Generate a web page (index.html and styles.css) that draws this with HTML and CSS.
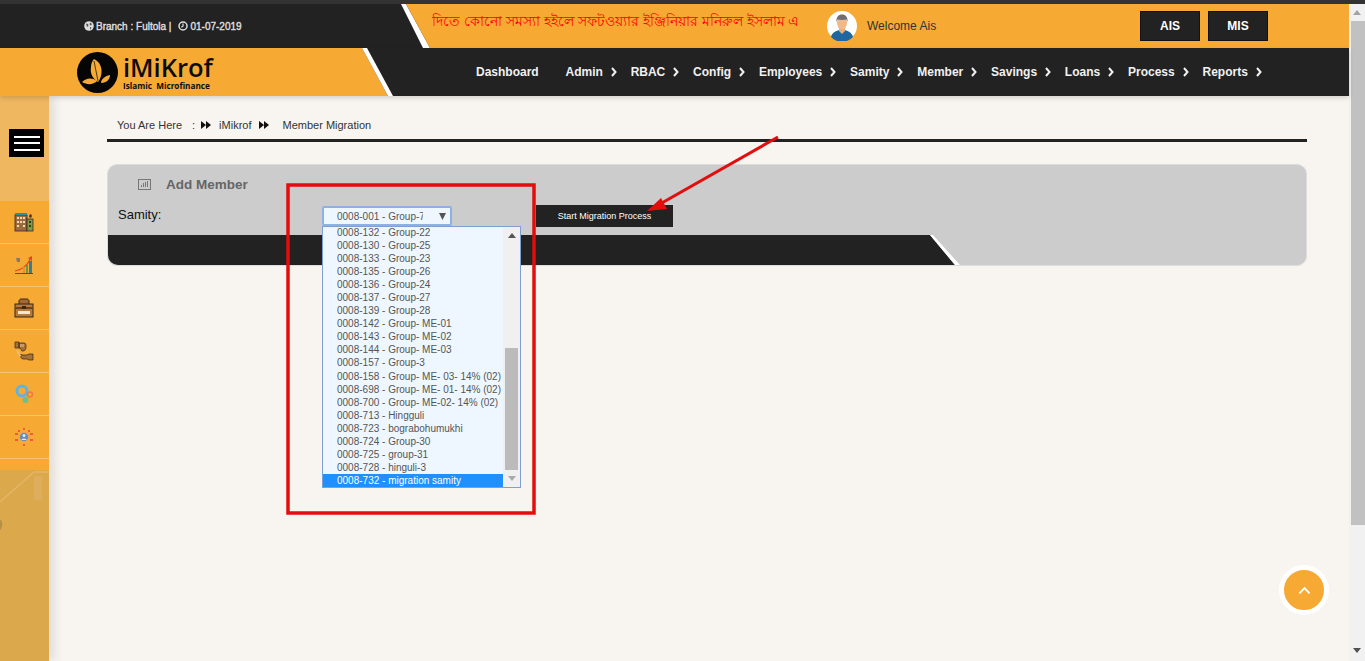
FILE: index.html
```html
<!DOCTYPE html>
<html>
<head>
    <meta charset="UTF-8">
    <title>Member Migration</title>
    <link rel="stylesheet" href="styles.css">
</head>
<body>
<div class="page">
    <div class="top-strip"></div>
    <div class="screen">
        <div class="app">
            <!-- fila superior -->
            <header class="topbar">
                <div class="branch">
                    <svg class="tiny-icon" viewBox="0 0 10 10"><circle cx="5" cy="5" r="4.8" fill="#ddd"/><path d="M2 2.500l2 .5 .5 2-1.500 1zM6 1.500l2 1.500-1 1.500-1.500-1zM6 6l1.500 .5-1.500 2.500z" fill="#555"/></svg>
                    <span>Branch : Fultola |</span>
                    <svg class="tiny-icon clock" viewBox="0 0 10 10"><circle cx="5" cy="5" r="4" fill="none" stroke="#ddd" stroke-width="1.500"/><path d="M5 2.500v2.700l-1.800 1" fill="none" stroke="#ddd" stroke-width="1.200"/></svg>
                    <span>01-07-2019</span>
                </div>
                <svg class="slant" width="30" height="44" viewBox="0 0 30 44"><polygon points="0,0 5,0 29,44 22,44" fill="#fff"/><polygon points="5,0 30,0 30,44 29,44" fill="#f6aa33"/></svg>
                <div class="notice">
                    <div class="notice-text">দিতে কোনো সমস্যা হইলে সফটওয়্যার ইঞ্জিনিয়ার মনিরুল ইসলাম এ</div>
                    <svg class="avatar" viewBox="0 0 30 30">
                        <circle cx="15" cy="15" r="15" fill="#fff"/>
                        <path d="M4 26c1-5 6-6 8-7h6c2 1 7 2 8 7a15 15 0 0 1-22 0z" fill="#20679f"/>
                        <path d="M12 17h6v3l-3 3-3-3z" fill="#e8ae7c"/>
                        <ellipse cx="15" cy="12" rx="5" ry="6.500" fill="#f0b98a"/>
                        <path d="M9.500 11c-.5-5 2-7.500 5.500-7.500s6 2.500 5.500 7.500l-1-2.500c-3 .5-6 .5-9 0z" fill="#6d6f72"/>
                    </svg>
                    <span class="welcome">Welcome Ais</span>
                    <div class="app-btns">
                        <a class="app-btn">AIS</a>
                        <a class="app-btn">MIS</a>
                    </div>
                </div>
            </header>

            <!-- logo y menu -->
            <div class="navbar">
                <div class="brand">
                    <svg class="logo" viewBox="0 0 41 41">
                        <circle cx="20.500" cy="20.500" r="20.500" fill="#050505"/>
                        <path d="M17 7c6 3 9 9 7 17-1 3-2 5-3 6-6-4-8-9-7-15 0-3 1-6 3-8z" fill="#f6aa33"/>
                        <path d="M5 30c4-4 10-5 15-1-4 4-10 4-15 1z" fill="#f6aa33"/>
                        <path d="M24 31c0-4 4-7 9-8 0 4-3 8-9 8z" fill="#f6aa33"/>
                        <path d="M17 9c1 7 3 13 4 20" stroke="#050505" stroke-width=".7" fill="none"/>
                    </svg>
                    <div class="brand-text">
                        <div class="brand-name">iMiKrof</div>
                        <div class="brand-sub">Islamic&nbsp; Microfinance</div>
                    </div>
                </div>
                <svg class="slant" width="31" height="48" viewBox="0 0 31 48"><rect width="31" height="48" fill="#222"/><polygon points="0,0 0,48 26,48" fill="#f6aa33"/><polygon points="0,0 5,0 31,48 26,48" fill="#fff"/></svg>
                <nav class="menu">
                    <a class="menu-item menu-first">Dashboard</a>
                    <a class="menu-item">Admin <svg class="chev" viewBox="0 0 6 10"><path d="M1 1l3.500 4L1 9"/></svg></a>
                    <a class="menu-item">RBAC <svg class="chev" viewBox="0 0 6 10"><path d="M1 1l3.500 4L1 9"/></svg></a>
                    <a class="menu-item">Config <svg class="chev" viewBox="0 0 6 10"><path d="M1 1l3.500 4L1 9"/></svg></a>
                    <a class="menu-item">Employees <svg class="chev" viewBox="0 0 6 10"><path d="M1 1l3.500 4L1 9"/></svg></a>
                    <a class="menu-item">Samity <svg class="chev" viewBox="0 0 6 10"><path d="M1 1l3.500 4L1 9"/></svg></a>
                    <a class="menu-item">Member <svg class="chev" viewBox="0 0 6 10"><path d="M1 1l3.500 4L1 9"/></svg></a>
                    <a class="menu-item">Savings <svg class="chev" viewBox="0 0 6 10"><path d="M1 1l3.500 4L1 9"/></svg></a>
                    <a class="menu-item">Loans <svg class="chev" viewBox="0 0 6 10"><path d="M1 1l3.500 4L1 9"/></svg></a>
                    <a class="menu-item">Process <svg class="chev" viewBox="0 0 6 10"><path d="M1 1l3.500 4L1 9"/></svg></a>
                    <a class="menu-item">Reports <svg class="chev" viewBox="0 0 6 10"><path d="M1 1l3.500 4L1 9"/></svg></a>
                </nav>
            </div>

            <div class="body-row">
                <aside class="sidebar">
                    <div class="side-top">
                        <div class="burger"><i></i><i></i><i></i></div>
                    </div>
                    <div class="side-item">
                        <svg class="side-icon" viewBox="0 0 20 20">
                            <rect x="1" y="3" width="12" height="16" fill="#9a6a43" stroke="#3a2a1c" stroke-width=".8"/>
                            <rect x="1" y="1" width="12" height="2" fill="#2f8f98"/>
                            <rect x="13" y="7" width="6" height="12" fill="#7d9a4a" stroke="#3a2a1c" stroke-width=".8"/>
                            <path d="M3 5h2v2H3zM6 5h2v2H6zM9 5h2v2H9zM3 9h2v2H3zM6 9h2v2H6zM9 9h2v2H9zM3 13h2v2H3zM9 13h2v2H9z" fill="#f3d9a8"/>
                            <path d="M15 9h2v2h-2zM15 13h2v2h-2z" fill="#2c3a18"/>
                            <path d="M15 5c0-2 1-3 2-3l1 2-1 2z" fill="#4a3a22"/>
                        </svg>
                    </div>
                    <div class="side-item">
                        <svg class="side-icon" viewBox="0 0 20 20">
                            <path d="M2 3h4v4H3z" fill="#8b7a55"/>
                            <path d="M1 16C8 15 13 11 17 3" fill="none" stroke="#e8402a" stroke-width="1.200"/>
                            <path d="M14 3l4-2 0 5z" fill="#e8402a"/>
                            <rect x="9" y="12" width="2" height="6" fill="#e8902a"/>
                            <rect x="12" y="10" width="2" height="8" fill="#6c9a3a"/>
                            <rect x="15" y="6" width="3" height="12" fill="#2d7fa8"/>
                            <rect x="1" y="18" width="18" height="1" fill="#6b4a22"/>
                        </svg>
                    </div>
                    <div class="side-item">
                        <svg class="side-icon" viewBox="0 0 20 20">
                            <path d="M5 6V3c0-1 1-2 2-2h6c1 0 2 1 2 2v3" fill="#a5682f" stroke="#35261a"/>
                            <rect x="1" y="6" width="18" height="13" fill="#b87a3a" stroke="#35261a"/>
                            <rect x="1" y="9" width="18" height="2" fill="#6a431f"/>
                            <rect x="4" y="13" width="12" height="3" fill="#f2e6cf"/>
                            <rect x="8" y="8" width="4" height="3" fill="#35261a"/>
                        </svg>
                    </div>
                    <div class="side-item">
                        <svg class="side-icon" viewBox="0 0 20 20">
                            <path d="M1 1h4v6H1zM5 2h5c2 0 2 2 2 4s-1 4-3 4H8L6 7H5z" fill="#a5713a" stroke="#35261a" stroke-width=".7"/>
                            <path d="M7 14h6l2-1h4v6h-4l-2-1H9c-2 0-3-3-2-5z" fill="#a5713a" stroke="#35261a" stroke-width=".7"/>
                            <path d="M7 3v3M9 3v3" stroke="#e9c48f"/>
                            <path d="M3 9c1 3 2 5 4 6" stroke="#e9c48f" stroke-width="1.300" fill="none"/>
                        </svg>
                    </div>
                    <div class="side-item">
                        <svg class="side-icon" viewBox="0 0 20 20">
                            <circle cx="8" cy="7" r="5" fill="none" stroke="#5cb4e0" stroke-width="3"/>
                            <circle cx="16" cy="10.500" r="2.500" fill="none" stroke="#ee7b45" stroke-width="1.500"/>
                            <circle cx="11.500" cy="16" r="3" fill="#6fbf8a"/>
                        </svg>
                    </div>
                    <div class="side-item">
                        <svg class="side-icon" viewBox="0 0 20 20">
                            <circle cx="10" cy="10" r="4.500" fill="#5b8ec4" stroke="#e9a06e"/>
                            <circle cx="10" cy="8.500" r="1.500" fill="#f3e2cc"/>
                            <path d="M7.500 13c0-2 5-2 5 0z" fill="#f3e2cc"/>
                            <path d="M9 1h2v2H9zM9 17h2v2H9zM1 6h3v2H1zM16 6h3v2h-3zM1 12h3v2H1zM16 12h3v2h-3zM4 3h2v2H4zM14 3h2v2h-2z" fill="#ee5c3d"/>
                        </svg>
                    </div>
                    <div class="side-photo">
                        <svg class="road" viewBox="0 0 49 60" preserveAspectRatio="none">
                            <path d="M0 32L34 2h15" fill="none" stroke="#e3b566" stroke-width="1.500"/>
                            <path d="M34 6h8v24h-8z" fill="#dfae5c"/>
                            <path d="M0 50c3 0 3 8 0 10z" fill="#b48f4a"/>
                        </svg>
                    </div>
                </aside>

                <main class="main">
                    <div class="crumbs">
                        <span>You Are Here</span>
                        <span class="crumb-colon">:</span>
                        <svg class="crumb-icon" viewBox="0 0 10 8"><path d="M0 0l5 4-5 4zM5 0l5 4-5 4z"/></svg>
                        <span>iMikrof</span>
                        <svg class="crumb-icon crumb-icon-b" viewBox="0 0 10 8"><path d="M0 0l5 4-5 4zM5 0l5 4-5 4z"/></svg>
                        <span class="crumb-last">Member Migration</span>
                    </div>

                    <section class="panel">
                        <div class="panel-head">
                            <svg class="panel-icon" viewBox="0 0 13 11"><rect x=".5" y=".5" width="12" height="10" fill="none" stroke="#777"/><path d="M3 8V6h1v2zM5 8V4h1v4zM7 8V3h1v5zM9 8V2h1v6z" fill="#777"/></svg>
                            <h2 class="panel-title">Add Member</h2>
                        </div>
                        <div class="panel-form">
                            <label class="samity-label">Samity:</label>
                            <div class="select">
                                <span class="select-value">0008-001 - Group-7</span>
                                <svg class="select-arrow" viewBox="0 0 8 8"><path d="M0 0h8L4 8z"/></svg>
                                <div class="dropdown">
                                    <ul class="options">
                                        <li>0008-132 - Group-22</li>
                                        <li>0008-130 - Group-25</li>
                                        <li>0008-133 - Group-23</li>
                                        <li>0008-135 - Group-26</li>
                                        <li>0008-136 - Group-24</li>
                                        <li>0008-137 - Group-27</li>
                                        <li>0008-139 - Group-28</li>
                                        <li>0008-142 - Group- ME-01</li>
                                        <li>0008-143 - Group- ME-02</li>
                                        <li>0008-144 - Group- ME-03</li>
                                        <li>0008-157 - Group-3</li>
                                        <li>0008-158 - Group- ME- 03- 14% (02)</li>
                                        <li>0008-698 - Group- ME- 01- 14% (02)</li>
                                        <li>0008-700 - Group- ME-02- 14% (02)</li>
                                        <li>0008-713 - Hingguli</li>
                                        <li>0008-723 - bograbohumukhi</li>
                                        <li>0008-724 - Group-30</li>
                                        <li>0008-725 - group-31</li>
                                        <li>0008-728 - hinguli-3</li>
                                        <li class="selected">0008-732 - migration samity</li>
                                    </ul>
                                    <div class="list-scroll">
                                        <svg class="list-arrow" viewBox="0 0 8 5"><path d="M4 0l4 5H0z"/></svg>
                                        <div class="list-thumb"></div>
                                        <svg class="list-arrow" viewBox="0 0 8 5"><path d="M0 0h8L4 5z"/></svg>
                                    </div>
                                </div>
                            </div>
                            <button class="start-btn" type="button">Start Migration Process</button>
                        </div>
                        <div class="panel-band">
                            <div class="band-fill"></div>
                            <svg class="slant" width="30" height="30" viewBox="0 0 30 30"><polygon points="0,0 0,30 25,30" fill="#222"/><polygon points="0,0 3,0 30,30 25,30" fill="#fff"/></svg>
                        </div>
                    </section>

                    <a class="to-top"><svg viewBox="0 0 14 9"><path d="M1.500 7.500L7 2l5.500 5.500" fill="none" stroke="#fff" stroke-width="2"/></svg></a>
                </main>
            </div>
        </div>

        <div class="scrollbar">
            <svg class="scroll-arrow" viewBox="0 0 8 5"><path d="M4 0l4 5H0z"/></svg>
            <div class="scroll-thumb"></div>
            <svg class="scroll-arrow scroll-down" viewBox="0 0 8 5"><path d="M0 0h8L4 5z"/></svg>
        </div>
    </div>

    <!-- marcas rojas sobre la captura -->
    <svg class="marks" width="1365" height="661" viewBox="0 0 1365 661">
        <rect x="288" y="185" width="246" height="328" fill="none" stroke="#e30d0d" stroke-width="3.500"/>
        <path d="M778 137L660 204" stroke="#e30d0d" stroke-width="3" fill="none"/>
        <polygon points="647,211 661,198 667,209" fill="#e30d0d"/>
    </svg>
</div>
</body>
</html>
```

FILE: styles.css
```css
* {
    box-sizing: border-box;
}

html, body {
    margin: 0;
    height: 100%;
    overflow: hidden;
}

body {
    font-family: "Liberation Sans", Arial, sans-serif;
    background-color: #f8f5f0;
}

.page {
    position: relative;
    display: flex;
    flex-direction: column;
    height: 661px;
}

.top-strip {
    height: 4px;
    background-color: #333;
}

.screen {
    flex: 1;
    display: flex;
    min-height: 0;
}

.app {
    flex: 1;
    display: flex;
    flex-direction: column;
    min-width: 0;
}

.slant {
    display: block;
    flex: none;
}

/* fila superior */
.topbar {
    display: flex;
    height: 44px;
    background-color: #222;
}

.branch {
    width: 401px;
    flex: none;
    display: flex;
    align-items: center;
    padding-left: 84px;
    color: #ddd;
    font-size: 10px;
    -webkit-text-stroke: 0.4px #ddd;
}

.tiny-icon {
    width: 10px;
    height: 10px;
    margin-right: 2px;
}

.clock {
    margin-left: 7px;
}

.notice {
    flex: 1;
    display: flex;
    align-items: center;
    padding-right: 81px;
    background-color: #f6aa33;
}

.notice-text {
    width: 371px;
    flex: none;
    margin: 0 24px 8px 1px;
    overflow: hidden;
    white-space: nowrap;
    color: #f00;
    font-size: 14.150px;
}

.avatar {
    width: 30px;
    height: 30px;
    flex: none;
    margin-right: 10px;
}

.welcome {
    color: #333;
    font-size: 12px;
}

.app-btns {
    display: flex;
    gap: 8px;
    margin-left: auto;
}

.app-btn {
    width: 60px;
    height: 30px;
    line-height: 29px;
    text-align: center;
    background-color: #222;
    border: 1px solid #111;
    color: #fff;
    font-size: 12px;
    font-weight: bold;
}

/* logo y menu */
.navbar {
    position: relative;
    z-index: 2;
    display: flex;
    height: 48px;
    background-color: #222;
    box-shadow: 0 2px 5px rgba(0, 0, 0, 0.15);
}

.brand {
    width: 362px;
    flex: none;
    display: flex;
    align-items: center;
    padding-left: 77px;
    background-color: #f6aa33;
}

.logo {
    width: 41px;
    height: 41px;
    flex: none;
    margin-right: 5px;
}

.brand-text {
    font-family: "Open Sans", sans-serif;
    color: #0c0c0c;
}

.brand-name {
    font-size: 25.500px;
    font-weight: 600;
    line-height: 28px;
}

.brand-sub {
    font-size: 8.200px;
    font-weight: 700;
    line-height: 10px;
    white-space: nowrap;
}

.menu {
    flex: 1;
    display: flex;
    align-items: center;
    gap: 13.800px;
    padding-left: 83px;
}

.menu-item {
    display: flex;
    align-items: center;
    gap: 8px;
    color: #f1f1f1;
    font-size: 12px;
    font-weight: bold;
    white-space: nowrap;
}

.menu-first {
    margin-right: 13px;
}

.chev {
    width: 6px;
    height: 10px;
    fill: none;
    stroke: #f1f1f1;
    stroke-width: 2;
}

/* barra lateral */
.body-row {
    flex: 1;
    display: flex;
    min-height: 0;
}

.sidebar {
    position: relative;
    z-index: 1;
    width: 49px;
    flex: none;
    display: flex;
    flex-direction: column;
    background-color: #f6aa33;
    box-shadow: 5px 0 10px rgba(0, 0, 0, 0.1);
}

.side-top {
    height: 105px;
    padding: 33px 0 0 9px;
    background-color: #efb75f;
}

.burger {
    width: 35px;
    height: 28px;
    display: flex;
    flex-direction: column;
    justify-content: center;
    align-items: center;
    gap: 4.500px;
    background-color: #000;
}

.burger i {
    display: block;
    width: 26px;
    height: 2px;
    background-color: #fff;
}

.side-item {
    height: 43px;
    flex: none;
    padding: 11px 0 0 14px;
    border-bottom: 1px solid #f9c36e;
}

.side-icon {
    display: block;
    width: 20px;
    height: 20px;
}

.side-photo {
    flex: 1;
    margin-top: 11px;
    background-color: #dca84c;
}

.road {
    display: block;
    width: 49px;
    height: 60px;
}

/* contenido */
.main {
    position: relative;
    flex: 1;
    min-width: 0;
    padding: 0 42px 0 58px;
}

.crumbs {
    display: flex;
    align-items: center;
    height: 46px;
    padding: 14px 0 0 10px;
    border-bottom: 3px solid #222;
    color: #333;
    font-size: 11px;
}

.crumb-colon {
    margin: 0 3px 0 10px;
}

.crumb-icon {
    width: 10px;
    height: 8px;
    margin: 0 8px 0 3px;
    fill: #111;
}

.crumb-icon-b {
    margin-left: 8px;
}

.crumb-last {
    margin-left: 5px;
}

.panel {
    margin-top: 22px;
    background-color: #ccc;
    border: 1px solid #ddd;
    border-radius: 10px;
}

.panel-head {
    display: flex;
    align-items: center;
    height: 40px;
    padding: 0 0 2px 30px;
}

.panel-icon {
    width: 13px;
    height: 11px;
    margin-right: 15px;
}

.panel-title {
    margin: 0;
    color: #666;
    font-size: 13.500px;
    font-weight: bold;
}

.panel-form {
    display: flex;
    align-items: center;
    height: 22px;
    margin-bottom: 8px;
    padding-left: 10px;
}

.samity-label {
    width: 204px;
    flex: none;
    padding-bottom: 3px;
    font-size: 13px;
    color: #111;
}

.select {
    position: relative;
    width: 130px;
    height: 20px;
    display: flex;
    align-items: center;
    padding-left: 13px;
    background-color: #eef7ff;
    border: 2px solid #8eb1e3;
    border-radius: 2px;
    color: #555;
    font-size: 10px;
}

.select-value {
    width: 86px;
    overflow: hidden;
    white-space: nowrap;
}

.select-arrow {
    width: 7px;
    height: 7px;
    margin-left: 16px;
    fill: #555;
}

.dropdown {
    position: absolute;
    z-index: 3;
    top: 18px;
    left: -2px;
    width: 199px;
    height: 262px;
    display: flex;
    overflow: hidden;
    background-color: #eef7ff;
    border: 1px solid #7f9fd3;
}

.options {
    flex: 1;
    margin: -1px 0 0;
    padding: 0;
    list-style: none;
}

.options li {
    height: 13.050px;
    line-height: 13px;
    padding-left: 14px;
    white-space: nowrap;
    color: #555;
    font-size: 10px;
}

.options .selected {
    background-color: #1e90ff;
    color: #fff;
}

.list-scroll {
    width: 17px;
    flex: none;
    display: flex;
    flex-direction: column;
    align-items: center;
    padding: 6px 0;
    background-color: #f0f0f0;
}

.list-arrow {
    width: 8px;
    height: 5px;
    flex: none;
    fill: #555;
}

.list-arrow:last-child {
    fill: #aaa;
    margin-top: 6px;
}

.list-thumb {
    width: 13px;
    height: 122px;
    margin-top: auto;
    background-color: #bbb;
}

.start-btn {
    width: 137px;
    height: 22px;
    margin-left: 84px;
    padding: 0;
    background-color: #222;
    border: 0;
    color: #fff;
    font-family: "Liberation Sans", Arial, sans-serif;
    font-size: 9px;
}

.panel-band {
    display: flex;
    height: 30px;
}

.band-fill {
    width: 822px;
    flex: none;
    background-color: #222;
    border-bottom-left-radius: 10px;
}

.to-top {
    position: absolute;
    right: 20px;
    bottom: 46px;
    width: 50px;
    height: 50px;
    display: flex;
    align-items: center;
    justify-content: center;
    background-color: #f6aa33;
    border: 5px solid #fff;
    border-radius: 50%;
}

.to-top svg {
    width: 13px;
    height: 9px;
}

/* barra de desplazamiento */
.scrollbar {
    width: 16px;
    flex: none;
    display: flex;
    flex-direction: column;
    align-items: center;
    background-color: #f1f1f1;
}

.scroll-arrow {
    width: 8px;
    height: 5px;
    flex: none;
    margin-top: 6px;
    fill: #a3a3a3;
}

.scroll-thumb {
    width: 14px;
    height: 504px;
    margin: 6px 0 0 2px;
    background-color: #c1c1c1;
}

.scroll-down {
    margin-top: auto;
    margin-bottom: 8px;
    fill: #505050;
}

.marks {
    position: absolute;
    top: 0;
    left: 0;
    z-index: 5;
    pointer-events: none;
}
```
